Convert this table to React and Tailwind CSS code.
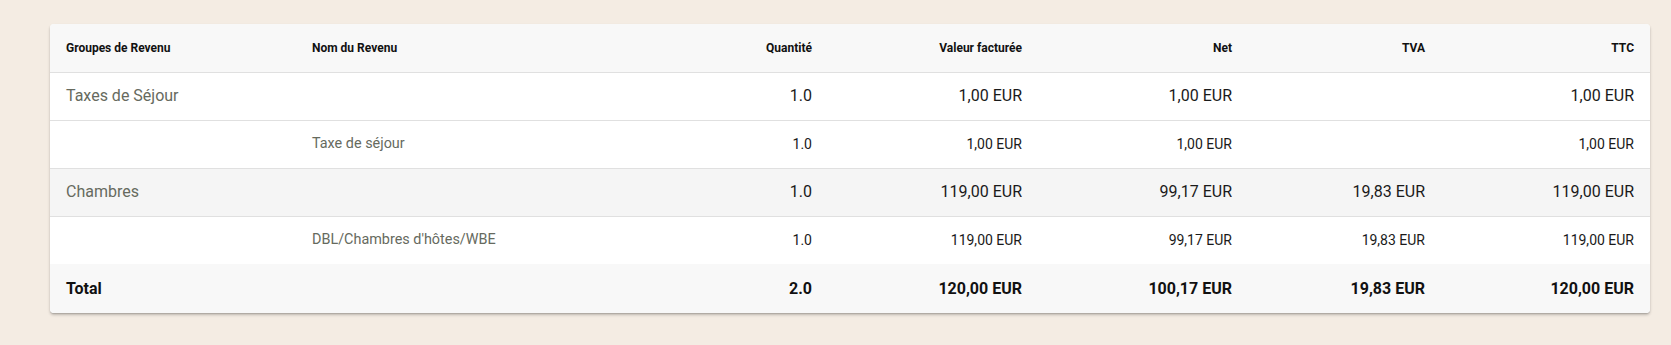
import React from "react";

const rows = [
  { type: "group", group: "Taxes de Séjour", name: "", qty: "1.0", billed: "1,00 EUR", net: "1,00 EUR", vat: "", gross: "1,00 EUR", bg: "bg-white" },
  { type: "item", group: "", name: "Taxe de séjour", qty: "1.0", billed: "1,00 EUR", net: "1,00 EUR", vat: "", gross: "1,00 EUR", bg: "bg-white" },
  { type: "group", group: "Chambres", name: "", qty: "1.0", billed: "119,00 EUR", net: "99,17 EUR", vat: "19,83 EUR", gross: "119,00 EUR", bg: "bg-[#f5f5f5]" },
  { type: "item", group: "", name: "DBL/Chambres d'hôtes/WBE", qty: "1.0", billed: "119,00 EUR", net: "99,17 EUR", vat: "19,83 EUR", gross: "119,00 EUR", bg: "bg-white", last: true },
];

export default function App() {
  return (
    <div className="min-h-screen bg-[#f4ece3] pt-6 pl-[50px] pr-[21px] font-['Roboto',sans-serif]">
      <div className="bg-white rounded shadow-[0_2px_3px_rgba(0,0,0,0.22),0_1px_1px_rgba(0,0,0,0.12)] overflow-hidden">
        <table className="w-full table-fixed border-collapse">
          <colgroup>
            <col className="w-[246px]" />
            <col className="w-[382px]" />
            <col className="w-[150px]" />
            <col className="w-[210px]" />
            <col className="w-[210px]" />
            <col className="w-[193px]" />
            <col className="w-[209px]" />
          </colgroup>
          <thead>
            <tr className="h-12 bg-[#f8f8f8] border-b border-[#e0e0e0] text-[12px] font-bold text-[#111]">
              <th className="px-4 text-left font-bold">Groupes de Revenu</th>
              <th className="px-4 text-left font-bold">Nom du Revenu</th>
              <th className="px-4 text-right font-bold">Quantité</th>
              <th className="px-4 text-right font-bold">Valeur facturée</th>
              <th className="px-4 text-right font-bold">Net</th>
              <th className="px-4 text-right font-bold">TVA</th>
              <th className="px-4 text-right font-bold">TTC</th>
            </tr>
          </thead>
          <tbody>
            {rows.map((r, i) => {
              const isGroup = r.type === "group";
              return (
                <tr
                  key={i}
                  className={`h-12 ${r.bg} ${r.last ? "" : "border-b border-[#e0e0e0]"} ${isGroup ? "text-[16px]" : "text-[14px]"} text-[#1a1a1a]`}
                >
                  <td className="px-4 text-left text-[#666a5e]">{r.group}</td>
                  <td className="px-4 text-left text-[#666a5e] text-[14.4px]">{r.name}</td>
                  <td className="px-4 text-right">{r.qty}</td>
                  <td className="px-4 text-right">{r.billed}</td>
                  <td className="px-4 text-right">{r.net}</td>
                  <td className="px-4 text-right">{r.vat}</td>
                  <td className="px-4 text-right">{r.gross}</td>
                </tr>
              );
            })}
            <tr className="h-[49px] bg-[#f8f8f8] text-[16px] font-bold text-[#111]">
              <td className="px-4 text-left">Total</td>
              <td className="px-4"></td>
              <td className="px-4 text-right">2.0</td>
              <td className="px-4 text-right">120,00 EUR</td>
              <td className="px-4 text-right">100,17 EUR</td>
              <td className="px-4 text-right">19,83 EUR</td>
              <td className="px-4 text-right">120,00 EUR</td>
            </tr>
          </tbody>
        </table>
      </div>
    </div>
  );
}
